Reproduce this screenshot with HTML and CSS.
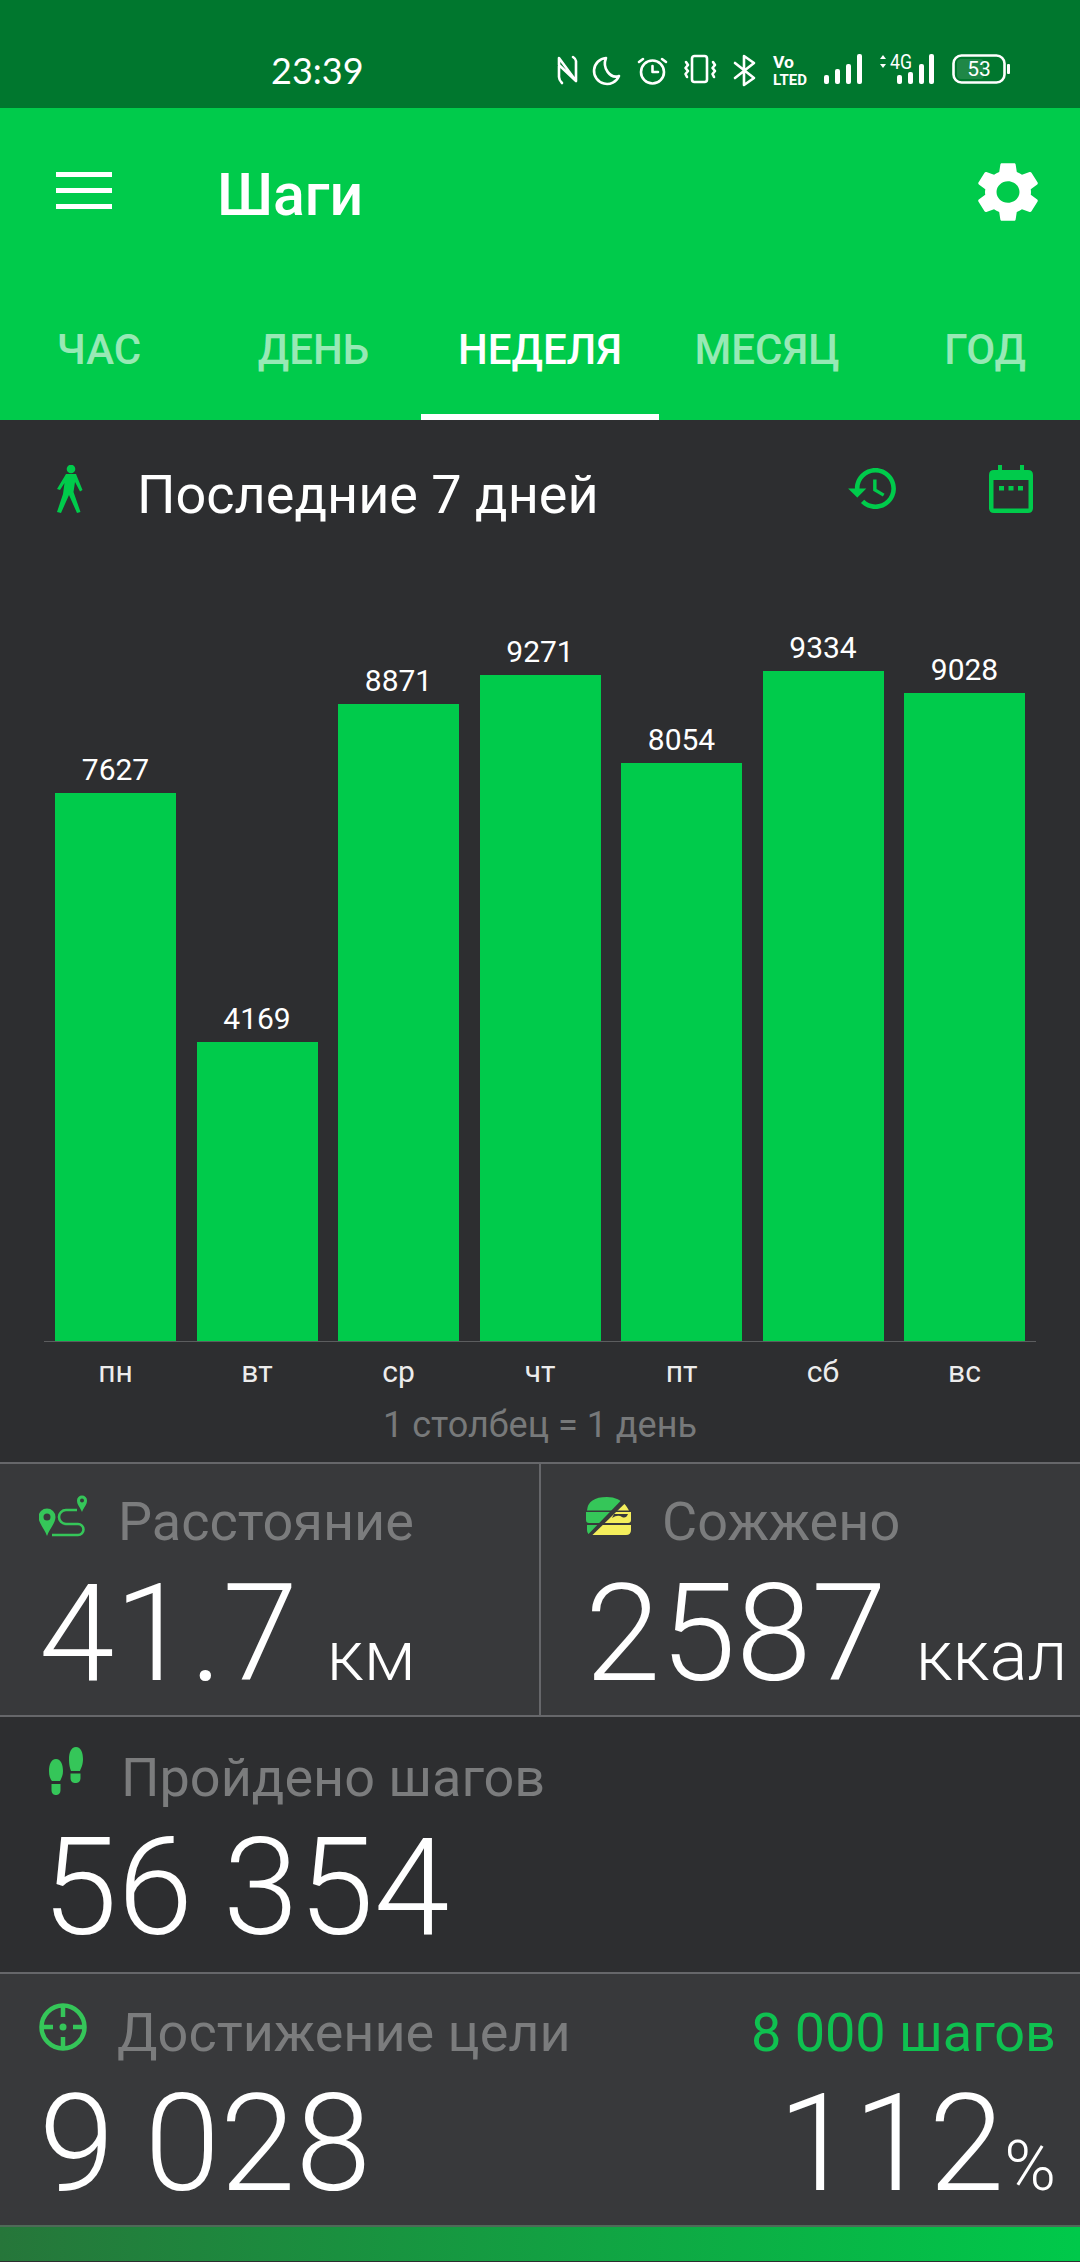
FILE: index.html
```html
<!DOCTYPE html>
<html>
	<head>
		<meta charset="utf-8">
		<title>Шаги</title>
		<link rel="stylesheet" href="styles.css">
	</head>
	<body>
		<!-- status bar -->
		<div class="status">
			<span class="time">23:39</span>
			<div class="status-icons">
				<svg width="21" height="32" viewBox="0 0 21 32" class="line"><path d="M5 29 Q2 26 2 23 V4 L19 27 V7 Q19 5 16 3 M2 11 L19 27"/></svg>
				<svg width="26" height="32" viewBox="0 0 26 32" class="line"><path d="M11 4 A13 13 0 1 0 24 22 C15 25 7 14 11 4 Z"/></svg>
				<svg width="29" height="32" viewBox="0 0 29 32" class="line"><circle cx="14.5" cy="18" r="11.5"/><path d="M14.5 12 V18 H20 M5 5 L1 8 M24 5 L28 8"/></svg>
				<svg width="32" height="32" viewBox="0 0 32 32" class="line"><rect x="8" y="2" width="15" height="26" rx="2.5"/><path d="M2 8 L4 11 L1.500 14 L4 17 L1.500 20 L3 23 M29 8 L31 11 L28.500 14 L31 17 L28.500 20 L30 23"/></svg>
				<svg width="23" height="32" viewBox="0 0 23 32" class="line"><path d="M2 9 L21 24 L11 31 V2 L21 9 L2 24"/></svg>
				<svg width="34" height="32" viewBox="0 0 34 32" class="tiny"><text x="0" y="13.500" font-size="17" textLength="21" lengthAdjust="spacingAndGlyphs">Vo</text><text x="0" y="31" font-size="14" textLength="34" lengthAdjust="spacingAndGlyphs">LTED</text></svg>
				<svg width="38" height="32" viewBox="0 0 38 32" class="bars"><rect x="0" y="21" width="5" height="9" rx="2"/><rect x="11" y="15" width="5" height="15" rx="2"/><rect x="22" y="10" width="5" height="20" rx="2"/><rect x="33" y="0" width="5" height="30" rx="2"/></svg>
				<svg width="56" height="32" viewBox="0 0 56 32" class="bars"><path d="M4 1 L7 5 H1 Z M4 14 L1 10 H7 Z"/><text x="11" y="15" font-size="20" class="thin" textLength="22" lengthAdjust="spacingAndGlyphs">4G</text><rect x="18" y="21" width="5" height="9" rx="2"/><rect x="29" y="18" width="5" height="12" rx="2"/><rect x="40" y="10" width="5" height="20" rx="2"/><rect x="50" y="0" width="5" height="30" rx="2"/></svg>
				<svg width="58" height="32" viewBox="0 0 58 32" class="battery"><rect class="level" x="5" y="5" width="27" height="20" rx="4"/><rect class="case" x="1.500" y="1.500" width="51" height="27" rx="8"/><rect class="cap" x="55" y="10" width="3" height="10" rx="1"/><text x="27" y="22" font-size="21" text-anchor="middle">53</text></svg>
			</div>
		</div>

		<!-- toolbar and tabs -->
		<div class="toolbar">
			<div class="toolbar-top">
				<div class="menu"><i></i><i></i><i></i></div>
				<div class="app-title">Шаги</div>
				<svg class="gear" width="60" height="60" viewBox="2.600 2 18.800 20" preserveAspectRatio="none"><path d="M19.140 12.940c.04-.3.06-.61.06-.94 0-.32-.02-.64-.07-.94l2.030-1.580c.18-.14.23-.41.12-.61l-1.920-3.320c-.12-.22-.37-.29-.59-.22l-2.390.96c-.5-.38-1.030-.7-1.620-.94l-.36-2.540c-.04-.24-.24-.41-.48-.41h-3.840c-.24 0-.43.17-.47.41l-.36 2.540c-.59.24-1.130.57-1.620.94l-2.390-.96c-.22-.08-.47 0-.59.22L2.740 8.870c-.12.21-.08.47.12.61l2.030 1.580c-.05.3-.09.63-.09.94s.02.64.07.94l-2.030 1.580c-.18.14-.23.41-.12.61l1.920 3.320c.12.22.37.29.59.22l2.390-.96c.5.38 1.030.7 1.620.94l.36 2.540c.05.24.24.41.48.41h3.840c.24 0 .44-.17.47-.41l.36-2.540c.59-.24 1.130-.56 1.620-.94l2.390.96c.22.08.47 0 .59-.22l1.920-3.320c.12-.22.07-.47-.12-.61l-2.010-1.580zM12 15.600c-1.980 0-3.600-1.620-3.600-3.600s1.620-3.600 3.600-3.600 3.600 1.620 3.600 3.600-1.620 3.600-3.600 3.600z"/></svg>
			</div>
			<div class="tabs">
				<div class="tab">ЧАС</div>
				<div class="tab tab-day">ДЕНЬ</div>
				<div class="tab active">НЕДЕЛЯ</div>
				<div class="tab">МЕСЯЦ</div>
				<div class="tab tab-year">ГОД</div>
			</div>
		</div>

		<!-- chart header -->
		<div class="chart-head">
			<svg class="walk" width="28" height="50" viewBox="26 10 28 50"><circle cx="41" cy="14" r="4.300"/><path d="M36 19 L46 19 L52.500 35 L50 36.500 L45 27 L43.500 37 L50.500 57 L47 58 L39 40 L31 58 L27 57 L33 39 L34.500 28 L30 35 L27 34 Z"/></svg>
			<div class="chart-title">Последние 7 дней</div>
			<svg class="history" width="48" height="41" viewBox="1 3 21 18"><path d="M13 3c-4.970 0-9 4.030-9 9H1l3.890 3.890.07.14L9 12H6c0-3.870 3.130-7 7-7s7 3.130 7 7-3.130 7-7 7c-1.930 0-3.680-.79-4.940-2.060l-1.420 1.420C8.270 19.990 10.510 21 13 21c4.970 0 9-4.030 9-9s-4.030-9-9-9zm-1 5v5l4.280 2.540.72-1.210-3.500-2.080V8H12z"/></svg>
			<svg class="calendar" width="44" height="48" viewBox="0 0 44 48"><path fill-rule="evenodd" d="M9 0 H13 V5 H31 V0 H35 V5 H39 Q44 5 44 10 V43 Q44 48 39 48 H5 Q0 48 0 43 V10 Q0 5 5 5 H9 Z M4.500 15 V43.500 H39.500 V15 Z"/><rect x="10" y="21" width="5" height="4.500"/><rect x="19.500" y="21" width="5" height="4.500"/><rect x="29" y="21" width="5" height="4.500"/></svg>
		</div>

		<!-- bars: height = steps * 0.0718 -->
		<div class="chart">
			<div class="col"><span class="val">7627</span><div class="bar" style="height: 548px"></div></div>
			<div class="col"><span class="val">4169</span><div class="bar" style="height: 299px"></div></div>
			<div class="col"><span class="val">8871</span><div class="bar" style="height: 637px"></div></div>
			<div class="col"><span class="val">9271</span><div class="bar" style="height: 666px"></div></div>
			<div class="col"><span class="val">8054</span><div class="bar" style="height: 578px"></div></div>
			<div class="col"><span class="val">9334</span><div class="bar" style="height: 670px"></div></div>
			<div class="col"><span class="val">9028</span><div class="bar" style="height: 648px"></div></div>
		</div>
		<div class="axis">
			<span>пн</span><span>вт</span><span>ср</span><span>чт</span><span>пт</span><span>сб</span><span>вс</span>
		</div>
		<div class="caption">1 столбец = 1 день</div>

		<!-- distance / calories -->
		<div class="row row-one light">
			<div class="cell cell-left">
				<div class="head">
					<svg class="ic ic-route" width="48" height="42" viewBox="9 10 48 42">
						<path class="pin" fill-rule="evenodd" d="M17 51 C14 43 8.500 38 8.500 32 A8.500 8.500 0 0 1 25.500 32 C25.500 38 20 43 17 51 Z M17 28.500 A3.500 3.500 0 1 0 17 35.500 A3.500 3.500 0 1 0 17 28.500 Z"/>
						<path class="pin" fill-rule="evenodd" d="M52 27 C50 22 47 20 47 15.500 A5 5 0 0 1 57 15.500 C57 20 54 22 52 27 Z M52 13.500 A2 2 0 1 0 52 17.500 A2 2 0 1 0 52 13.500 Z"/>
						<path class="route" d="M47 25 H36 A7 7 0 0 0 36 39 H48 A5.500 5.500 0 0 1 48 50 H22"/>
					</svg>
					<span class="label">Расстояние</span>
				</div>
				<div class="big big-dist">41.7<span class="unit unit-km">км</span></div>
			</div>
			<div class="cell cell-right">
				<div class="head">
					<svg class="ic ic-burger" width="46" height="39" viewBox="11 11 46 39">
						<defs>
							<clipPath id="halfGreen"><polygon points="0 0 62 0 0 64"/></clipPath>
							<clipPath id="halfYellow"><polygon points="70 0 70 64 4 64"/></clipPath>
							<path id="burgerShape" fill-rule="evenodd" d="M13 25.500 Q14 12 33 12 Q48 12 55 25.500 Z M12 27 H57 V35 Q57 38 54 38 H15 Q12 38 12 35 Z M38 33 Q44 29 48 32 Q52 34 54 29 H40 Z M13 40 H57 V45 Q57 50 52 50 H18 Q13 50 13 45 Z"/>
						</defs>
						<use href="#burgerShape" fill="#35c659" clip-path="url(#halfGreen)"/>
						<use href="#burgerShape" fill="#f4ee5c" clip-path="url(#halfYellow)"/>
					</svg>
					<span class="label">Сожжено</span>
				</div>
				<div class="big big-cal">2587<span class="unit unit-kcal">ккал</span></div>
			</div>
		</div>

		<!-- steps -->
		<div class="row row-two">
			<div class="cell cell-steps">
				<div class="head">
					<svg class="ic ic-steps" width="34" height="48" viewBox="0 0 34 48">
						<path class="pin" d="M7 12 C2 12 0 18 0 24 C0 30 2 33 3 34 H11 C12 32 14 29 14 24 C14 18 12 12 7 12 Z M2.500 37 H11.500 V43 C11.500 47 9 48 7 48 C5 48 2.500 47 2.500 43 Z"/>
						<path class="pin" d="M27 0 C32 0 34 6 34 12 C34 18 32 21 31 24 H22 C21 21 20 18 20 12 C20 6 22 0 27 0 Z M21.500 26.500 H31.500 V31 C31.500 35 29 36 26.500 36 C24 36 21.500 35 21.500 31 Z"/>
					</svg>
					<span class="label">Пройдено шагов</span>
				</div>
				<div class="big big-steps">56 354</div>
			</div>
		</div>

		<!-- goal -->
		<div class="row row-three light">
			<div class="cell cell-goal">
				<div class="head">
					<svg class="ic ic-target" width="48" height="48" viewBox="0 0 48 48">
						<circle class="route" cx="24" cy="24" r="21.500"/>
						<path class="route" d="M24 3 V14 M24 34 V45 M3 24 H14 M34 24 H45"/>
						<circle class="pin" cx="24" cy="24" r="3.500"/>
					</svg>
					<span class="label">Достижение цели</span>
				</div>
				<div class="big big-goal">9 028</div>
			</div>
			<div class="cell cell-percent">
				<div class="goal">8 000 шагов</div>
				<div class="big">112<span class="unit unit-pct">%</span></div>
			</div>
		</div>

		<div class="progress"></div>
	</body>
</html>
```

FILE: styles.css
```css
*{
	margin: 0;
	padding: 0;
	box-sizing: border-box;
}

body{
	width: 1080px;
	height: 2262px;
	overflow: hidden;
	background-color: #2d2e30;
	font-family: Roboto, "Noto Sans", sans-serif;
	color: #fff;
}

/* status bar */
.status{
	height: 108px;
	display: flex;
	padding: 54px 0 0 271px;
	background-color: #00772e;
}

.time{
	width: 92px;
	font: 36px/32px Lato, sans-serif;
}

.status-icons{
	display: flex;
	gap: 17px;
	margin-left: 194px;
}

.status-icons svg{
	display: block;
	overflow: visible;
}

.status-icons text{
	font-family: Roboto, sans-serif;
	font-weight: 700;
	fill: #fff;
}

.line,
.battery .case{
	fill: none;
	stroke: #fff;
	stroke-width: 2.6;
	stroke-linecap: round;
	stroke-linejoin: round;
}

.bars,
.battery .cap{
	fill: #fff;
}

.status-icons .thin,
.battery text{
	font-weight: 400;
}

.battery{
	fill: none;
}

.battery .level{
	fill: rgba(255, 255, 255, 0.12);
}

/* toolbar */
.toolbar{
	height: 312px;
	background-color: #00cb4b;
}

.toolbar-top{
	height: 192px;
	display: flex;
	align-items: flex-start;
	padding: 54px 42px 0 56px;
}

.menu{
	width: 56px;
	display: flex;
	flex-direction: column;
	gap: 11px;
	margin-top: 10px;
}

.menu i{
	height: 5px;
	background-color: #fff;
}

.app-title{
	margin: 5px 0 0 105px;
	font-size: 59px;
	line-height: 56px;
	font-weight: 500;
}

.gear{
	margin-left: auto;
	fill: #fff;
}

.tabs{
	display: grid;
	grid-template-columns: 198px 223px 238px 216px 205px;
	height: 120px;
}

.tab{
	padding-top: 26px;
	text-align: center;
	font-size: 42px;
	line-height: 48px;
	font-weight: 500;
	color: rgba(255, 255, 255, 0.6);
}

.tab-day{
	padding-left: 8px;
}

.tab-year{
	padding-left: 15px;
}

.tab.active{
	color: #fff;
	border-bottom: 6px solid #fff;
}

/* chart header */
.chart-head{
	height: 110px;
	display: flex;
	align-items: flex-start;
	padding: 45px 47px 0 56px;
	fill: #00cb4b;
}

.chart-title{
	margin: 4px 0 0 53px;
	font-size: 54px;
	line-height: 52px;
}

.history{
	margin: 3px 0 0 auto;
}

.calendar{
	margin-left: 93px;
}

/* chart */
.chart{
	height: 811px;
	display: flex;
	align-items: flex-end;
	gap: 20.5px;
	padding: 0 55px;
}

.col{
	width: 121px;
	text-align: center;
}

.val{
	display: block;
	margin-bottom: 5.5px;
	font-size: 30px;
	line-height: 36px;
}

.bar{
	background-color: #00cb4b;
}

.axis{
	display: flex;
	gap: 20.5px;
	margin: 0 44px;
	padding: 12px 11px 0;
	border-top: 1px solid #5c5d5f;
}

.axis span{
	width: 121px;
	text-align: center;
	font-size: 30px;
	line-height: 36px;
	color: #ececec;
}

.caption{
	margin-top: 15px;
	text-align: center;
	font-size: 36px;
	line-height: 40px;
	color: #77797a;
}

/* stat rows */
.row{
	display: flex;
	border-top: 2px solid #66676a;
}

.light{
	background-color: #38393b;
}

.row-one{
	margin-top: 17px;
	height: 253px;
}

.row-two{
	height: 257px;
}

.row-three{
	height: 253px;
	justify-content: space-between;
}

.cell-left{
	width: 541px;
	padding: 32px 0 0 39px;
	border-right: 2px solid #66676a;
}

.cell-right{
	padding: 32px 0 0 44px;
}

.cell-steps{
	padding: 35px 0 0 49px;
}

.cell-goal{
	padding: 33px 0 0 39px;
}

.cell-percent{
	padding: 33px 24px 0 0;
	text-align: right;
}

.head{
	display: flex;
	height: 52px;
}

.ic{
	flex: none;
}

.ic-route{
	margin: -1px 31px 0 0;
}

.ic-burger{
	margin-right: 31px;
}

.ic-steps{
	margin: -5px 38px 0 0;
}

.ic-target{
	margin: -4px 30px 0 0;
}

.pin{
	fill: #35c659;
}

.route{
	fill: none;
	stroke: #35c659;
	stroke-width: 2.6;
}

.ic-target .route{
	stroke-width: 4.5;
}

.label{
	font-size: 54px;
	line-height: 52px;
	color: #7b7c7d;
}

.goal{
	font-size: 54px;
	line-height: 52px;
	color: #0fc150;
}

.big{
	margin-top: 18px;
	font-size: 136px;
	line-height: 136px;
	font-weight: 300;
	white-space: nowrap;
	word-spacing: -3px;
}

.row-two .big{
	margin-top: 16px;
}

.row-three .big{
	margin-top: 17px;
}

.big-steps{
	margin-left: -7px;
}

.unit{
	font-size: 71px;
	font-weight: 300;
}

.unit-km{
	margin-left: 29px;
}

.unit-kcal{
	margin-left: 29px;
}

.unit-pct{
	font-size: 70px;
}

/* progress strip at the bottom */
.progress{
	height: 36px;
	border-top: 2px solid #4f6a58;
	background: linear-gradient(to right, #26763a, #00c94a);
}
```
